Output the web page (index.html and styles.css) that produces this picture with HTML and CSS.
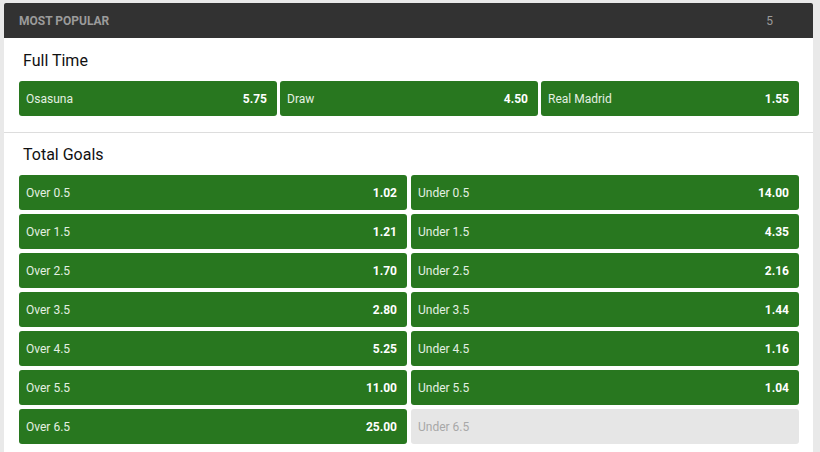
FILE: index.html
```html
<!DOCTYPE html>
<html>
<head>
<meta charset="utf-8">
<link rel="stylesheet" href="styles.css">
</head>
<body>
<div class="card">
  <div class="header">
    <span class="header-title">MOST POPULAR</span>
    <span class="header-count">5</span>
  </div>
  <div class="market first">
    <div class="market-title">Full Time</div>
    <div class="grid three">
      <div class="sel"><span class="name">Osasuna</span><span class="odds">5.75</span></div>
      <div class="sel"><span class="name">Draw</span><span class="odds">4.50</span></div>
      <div class="sel"><span class="name">Real Madrid</span><span class="odds">1.55</span></div>
    </div>
  </div>
  <div class="market second">
    <div class="market-title">Total Goals</div>
    <div class="grid two">
      <div class="sel"><span class="name">Over 0.5</span><span class="odds">1.02</span></div>
      <div class="sel"><span class="name">Under 0.5</span><span class="odds">14.00</span></div>
      <div class="sel"><span class="name">Over 1.5</span><span class="odds">1.21</span></div>
      <div class="sel"><span class="name">Under 1.5</span><span class="odds">4.35</span></div>
      <div class="sel"><span class="name">Over 2.5</span><span class="odds">1.70</span></div>
      <div class="sel"><span class="name">Under 2.5</span><span class="odds">2.16</span></div>
      <div class="sel"><span class="name">Over 3.5</span><span class="odds">2.80</span></div>
      <div class="sel"><span class="name">Under 3.5</span><span class="odds">1.44</span></div>
      <div class="sel"><span class="name">Over 4.5</span><span class="odds">5.25</span></div>
      <div class="sel"><span class="name">Under 4.5</span><span class="odds">1.16</span></div>
      <div class="sel"><span class="name">Over 5.5</span><span class="odds">11.00</span></div>
      <div class="sel"><span class="name">Under 5.5</span><span class="odds">1.04</span></div>
      <div class="sel"><span class="name">Over 6.5</span><span class="odds">25.00</span></div>
      <div class="sel disabled"><span class="name">Under 6.5</span></div>
    </div>
  </div>
</div>
</body>
</html>
```
FILE: styles.css
```css
html, body {
  margin: 0;
  padding: 0;
  background: #e9e9e9;
  font-family: Roboto, "Liberation Sans", Arial, sans-serif;
}
.card {
  margin: 3px 0 0 4px;
  width: 809px;
  background: #ffffff;
  height: 460px;
}
.header {
  height: 35px;
  background: #323232;
  border-radius: 2px 2px 0 0;
  display: flex;
  align-items: center;
  justify-content: space-between;
  padding: 0 40px 0 15px;
}
.header-title {
  color: #9b9b9b;
  font-size: 12px;
  font-weight: 700;
}
.header-count {
  color: #9b9b9b;
  font-size: 12px;
}
.market {
  padding: 12px 14px 16px 15px;
}
.market.first {
  padding-top: 13px;
}
.market.second {
  border-top: 1px solid #dddddd;
}
.market-title {
  font-size: 16px;
  line-height: 20px;
  color: #111111;
  padding-left: 4px;
  margin-bottom: 10px;
}
.grid {
  display: grid;
  gap: 4px 3px;
}
.grid.three {
  grid-template-columns: repeat(3, 1fr);
}
.grid.two {
  grid-template-columns: repeat(2, 1fr);
  column-gap: 4px;
}
.sel {
  height: 35px;
  background: #28771f;
  border-radius: 3px;
  display: flex;
  align-items: center;
  justify-content: space-between;
  padding: 0 10px 0 7px;
  font-size: 12px;
}
.name {
  color: #e4f0e2;
}
.odds {
  color: #ffffff;
  font-weight: 700;
}
.sel.disabled {
  background: #e6e6e6;
}
.sel.disabled .name {
  color: #a8a8a8;
}
```
